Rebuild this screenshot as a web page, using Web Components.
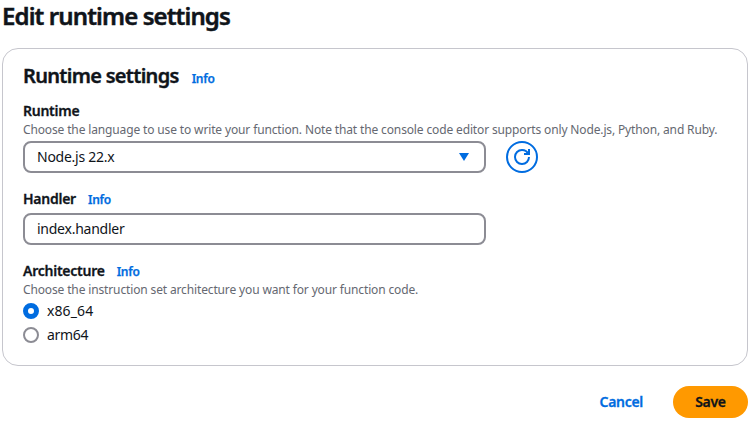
<!DOCTYPE html>
<html lang="en"><head><meta charset="utf-8"><title>Edit runtime settings</title>
<style>
body{margin:0;background:#fff;color:#0f141a;font-family:"Noto Sans","Open Sans",sans-serif;font-size:14px;line-height:20px}
</style></head><body>
<settings-page></settings-page>
<script>
const define=(name,css,html)=>customElements.define(name,class extends HTMLElement{
  constructor(){super();this.attachShadow({mode:'open'}).innerHTML=`<style>*{box-sizing:border-box}${css}</style>${html}`;}
});
define('info-link',':host{display:inline-block;color:#006ce0;font-size:12px;line-height:16px;font-weight:600;-webkit-text-stroke:.25px;letter-spacing:-.25px}','<slot>Info</slot>');
define('field-label',':host{display:block}.l{display:flex;gap:12px;align-items:baseline;font-weight:600;line-height:20px;height:20px;letter-spacing:-.25px}.l>slot:not([name]){-webkit-text-stroke:.3px}.d{font-size:12px;line-height:16px;height:16px;padding-top:1px;color:#656871;letter-spacing:-.14px;white-space:nowrap}','<div class="l"><slot></slot><slot name="info"></slot></div><div class="d"><slot name="description"></slot></div>');
define('field-box',':host{display:flex;box-sizing:border-box;align-items:center;justify-content:space-between;width:463px;height:32px;border:2px solid #8c8c94;border-radius:8px;padding:0 15px 0 12px;letter-spacing:-.25px}','<slot></slot><slot name="icon"></slot>');
define('refresh-button',':host{display:flex;box-sizing:border-box;align-items:center;justify-content:center;width:32px;height:32px;border:2px solid #006ce0;border-radius:50%;color:#006ce0}','<svg width="16" height="16" viewBox="0 0 16 16" fill="none" stroke="currentColor" stroke-width="2"><path d="M10 5h5V0"/><path d="M15 8a6.957 6.957 0 0 1-7 7 6.957 6.957 0 0 1-7-7 6.957 6.957 0 0 1 7-7 6.870 6.870 0 0 1 6.300 4"/></svg>');
define('radio-option',':host{display:flex;align-items:center;gap:8px;height:20px}:host(:not([checked])){letter-spacing:-.3px}:host([checked]){letter-spacing:.1px}i{width:16px;height:16px;border:2px solid #8c8c94;border-radius:50%}:host([checked]) i{border:5px solid #006ce0}','<i></i><slot></slot>');
define('action-button',':host{display:flex;box-sizing:border-box;height:32px;align-items:center;justify-content:center;padding:0 22px;border-radius:20px;font-weight:600;-webkit-text-stroke:.3px;letter-spacing:-.3px;color:#006ce0}:host([primary]){width:75px;background:#ff9900;color:#0f141a}','<slot></slot>');
define('settings-card',':host{display:block;box-sizing:border-box;width:746px;height:318px;border:1px solid #c6c6cd;border-radius:16px;padding:15px 20px}h2{margin:0;font-size:20px;font-weight:600;line-height:24px;letter-spacing:-.7px;display:flex;gap:13px;align-items:baseline}h2>slot[name=title]{-webkit-text-stroke:.4px}','<h2><slot name="title"></slot><slot name="info"></slot></h2><slot></slot>');
define('settings-page',`:host{display:block;box-sizing:border-box;width:756px;height:422px;padding:1px 8px 0 2px;overflow:hidden}
h1{margin:0 0 17px;font-size:24px;font-weight:600;-webkit-text-stroke:.5px;line-height:30px;letter-spacing:-.88px}
.row{display:flex;gap:20px;margin-top:4px}.runtime{margin-top:13px}.handler{margin-top:16px;height:20px}.arch{margin-top:16px}.box{margin-top:4px}.radios{display:grid;gap:4px;margin-top:4px}footer{display:flex;justify-content:flex-end;gap:8px;margin-top:20px}`,
`<h1>Edit runtime settings</h1><settings-card><span slot="title">Runtime settings</span><info-link slot="info"></info-link>
<field-label class="runtime">Runtime<span slot="description">Choose the language to use to write your function. Note that the console code editor supports only Node.js, Python, and Ruby.</span></field-label>
<div class="row"><field-box>Node.js 22.x<svg slot="icon" width="10" height="8"><path d="M0 0h10L5 8z" fill="#006ce0"/></svg></field-box><refresh-button></refresh-button></div>
<field-label class="handler">Handler<info-link slot="info"></info-link></field-label><field-box class="box">index.handler</field-box>
<field-label class="arch">Architecture<info-link slot="info"></info-link><span slot="description">Choose the instruction set architecture you want for your function code.</span></field-label>
<div class="radios"><radio-option checked>x86_64</radio-option><radio-option>arm64</radio-option></div></settings-card>
<footer><action-button>Cancel</action-button><action-button primary>Save</action-button></footer>`);
</script></body></html>
